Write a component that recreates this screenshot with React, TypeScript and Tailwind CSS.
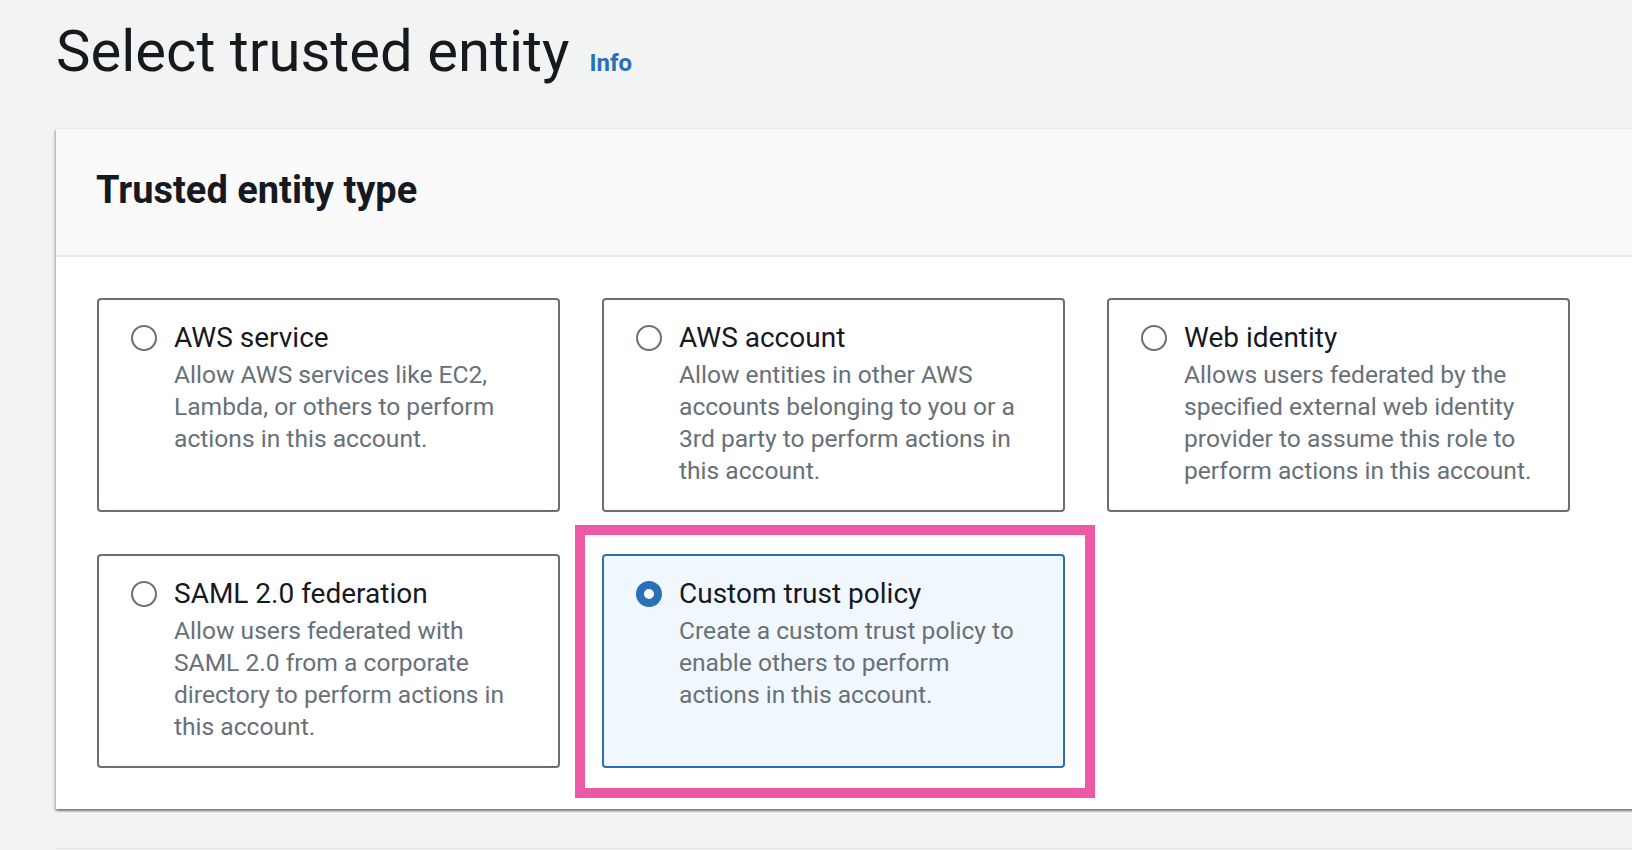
import React from 'react'

type Option = {
  id: string
  title: string
  lines: string[]
}

const options: Option[] = [
  {
    id: 'service',
    title: 'AWS service',
    lines: ['Allow AWS services like EC2,', 'Lambda, or others to perform', 'actions in this account.'],
  },
  {
    id: 'account',
    title: 'AWS account',
    lines: [
      'Allow entities in other AWS',
      'accounts belonging to you or a',
      '3rd party to perform actions in',
      'this account.',
    ],
  },
  {
    id: 'web',
    title: 'Web identity',
    lines: [
      'Allows users federated by the',
      'specified external web identity',
      'provider to assume this role to',
      'perform actions in this account.',
    ],
  },
  {
    id: 'saml',
    title: 'SAML 2.0 federation',
    lines: [
      'Allow users federated with',
      'SAML 2.0 from a corporate',
      'directory to perform actions in',
      'this account.',
    ],
  },
  {
    id: 'custom',
    title: 'Custom trust policy',
    lines: ['Create a custom trust policy to', 'enable others to perform', 'actions in this account.'],
  },
]

function Radio({ checked }: { checked: boolean }) {
  return checked ? (
    <span className="mt-[3px] block h-[26px] w-[26px] shrink-0 rounded-full border-[8px] border-[#2a6fb8] bg-white" />
  ) : (
    <span className="mt-[3px] block h-[26px] w-[26px] shrink-0 rounded-full border-[2.5px] border-[#687078] bg-white" />
  )
}

function Tile({ option, selected }: { option: Option; selected: boolean }) {
  return (
    <div className="relative">
      <div
        className={
          selected
            ? 'flex h-[214px] gap-[17px] rounded-[4px] border-2 border-[#2a6fb8] bg-[#f1f8fd] pl-[32px] pt-[22px]'
            : 'flex h-[214px] gap-[17px] rounded-[4px] border-2 border-[#687078] bg-white pl-[32px] pt-[22px]'
        }
      >
        <Radio checked={selected} />
        <div>
          <div className="text-[28px] leading-[32px] text-[#16191f]">{option.title}</div>
          <div className="mt-[5px] text-[24.6px] leading-[32px] text-[#687078]">
            {option.lines.map((line) => (
              <span key={line} className="block whitespace-nowrap">
                {line}
              </span>
            ))}
          </div>
        </div>
      </div>
      {/* highlight annotation */}
      {selected && (
        <div className="pointer-events-none absolute -bottom-[30px] -left-[27px] -right-[30px] -top-[29px] border-[10px] border-[#ec5aa6]" />
      )}
    </div>
  )
}

export default function App() {
  return (
    <div
      className="h-screen overflow-hidden bg-[#f2f3f3] pl-[56px] pt-[22px]"
      style={{ fontFamily: 'Roboto, "Liberation Sans", sans-serif' }}
    >
      <div className="flex items-baseline gap-[20px]">
        <h1 className="text-[58px] leading-[58px] font-normal text-[#16191f]">Select trusted entity</h1>
        <a className="text-[24px] font-bold text-[#2a6fb8]">Info</a>
      </div>

      <div className="mt-[47px] w-[1700px] border-t border-[#eaeded] bg-white shadow-[0_2px_2px_0_rgba(0,28,36,0.35),2px_2px_2px_0_rgba(0,28,36,0.15),-2px_2px_2px_0_rgba(0,28,36,0.15)]">
        <div className="h-[128px] border-b-2 border-[#eaeded] bg-[#fafafa] pl-[40px] pt-[39px]">
          <h2 className="text-[38px] leading-[44px] font-bold text-[#16191f]">Trusted entity type</h2>
        </div>
        <div className="grid w-[1597px] grid-cols-[463px_463px_463px] gap-[42px] pb-[41px] pl-[41px] pt-[41px]">
          {options.map((o) => (
            <Tile key={o.id} option={o} selected={o.id === 'custom'} />
          ))}
        </div>
      </div>

      <div className="mt-[39px] h-[40px] w-[1700px] border-t border-[#e4e7e7] bg-[#f2f3f3]" />
    </div>
  )
}
